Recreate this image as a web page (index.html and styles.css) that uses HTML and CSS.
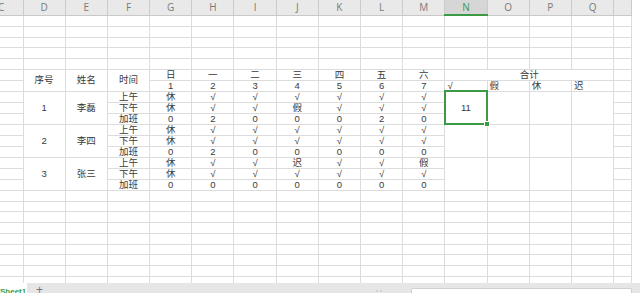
FILE: index.html
```html
<!DOCTYPE html>
<html lang="zh-CN">
<head>
  <meta charset="UTF-8">
  <meta name="viewport" content="width=device-width, initial-scale=1.0">
  <title>考勤表</title>
  <link rel="stylesheet" href="styles.css">
</head>
<body>

  <div class="app">
    <div class="grid-wrap">
      <table class="sheet">
        <colgroup>
          <col class="c-edge">
          <col><col><col><col><col><col><col><col><col><col><col><col><col><col>
          <col class="c-tail">
        </colgroup>
        <thead>
          <tr>
            <th class="edge">C</th><th>D</th><th>E</th><th>F</th><th>G</th><th>H</th><th>I</th><th>J</th>
            <th>K</th><th>L</th><th>M</th><th class="active">N</th><th>O</th><th>P</th><th>Q</th><th></th>
          </tr>
        </thead>
        <tbody>
          <tr><td></td><td></td><td></td><td></td><td></td><td></td><td></td><td></td><td></td><td></td><td></td><td></td><td></td><td></td><td></td><td></td></tr>
          <tr><td></td><td></td><td></td><td></td><td></td><td></td><td></td><td></td><td></td><td></td><td></td><td></td><td></td><td></td><td></td><td></td></tr>
          <tr><td></td><td></td><td></td><td></td><td></td><td></td><td></td><td></td><td></td><td></td><td></td><td></td><td></td><td></td><td></td><td></td></tr>
          <tr><td></td><td></td><td></td><td></td><td></td><td></td><td></td><td></td><td></td><td></td><td></td><td></td><td></td><td></td><td></td><td></td></tr>
          <tr><td></td><td></td><td></td><td></td><td></td><td></td><td></td><td></td><td></td><td></td><td></td><td></td><td></td><td></td><td></td><td></td></tr>

          <!-- 表头 -->
          <tr>
            <td></td>
            <td rowspan="2">序号</td><td rowspan="2">姓名</td><td rowspan="2">时间</td>
            <td>日</td><td>一</td><td>二</td><td>三</td><td>四</td><td>五</td><td>六</td>
            <td colspan="4">合计</td>
            <td></td>
          </tr>
          <tr>
            <td></td>
            <td>1</td><td>2</td><td>3</td><td>4</td><td>5</td><td>6</td><td>7</td>
            <td class="left">√</td><td class="left">假</td><td class="left">休</td><td class="left">迟</td>
            <td></td>
          </tr>

          <!-- 李磊 -->
          <tr>
            <td></td>
            <td rowspan="3">1</td><td rowspan="3">李磊</td><td>上午</td>
            <td>休</td><td>√</td><td>√</td><td>√</td><td>√</td><td>√</td><td>√</td>
            <td rowspan="3" class="sel">11</td><td rowspan="3"></td><td rowspan="3"></td><td rowspan="3"></td>
            <td></td>
          </tr>
          <tr>
            <td></td><td>下午</td>
            <td>休</td><td>√</td><td>√</td><td>假</td><td>√</td><td>√</td><td>√</td>
            <td></td>
          </tr>
          <tr>
            <td></td><td>加班</td>
            <td>0</td><td>2</td><td>0</td><td>0</td><td>0</td><td>2</td><td>0</td>
            <td></td>
          </tr>

          <!-- 李四 -->
          <tr>
            <td></td>
            <td rowspan="3">2</td><td rowspan="3">李四</td><td>上午</td>
            <td>休</td><td>√</td><td>√</td><td>√</td><td>√</td><td>√</td><td>√</td>
            <td rowspan="3"></td><td rowspan="3"></td><td rowspan="3"></td><td rowspan="3"></td>
            <td></td>
          </tr>
          <tr>
            <td></td><td>下午</td>
            <td>休</td><td>√</td><td>√</td><td>√</td><td>√</td><td>√</td><td>√</td>
            <td></td>
          </tr>
          <tr>
            <td></td><td>加班</td>
            <td>0</td><td>2</td><td>0</td><td>0</td><td>0</td><td>0</td><td>0</td>
            <td></td>
          </tr>

          <!-- 张三 -->
          <tr>
            <td></td>
            <td rowspan="3">3</td><td rowspan="3">张三</td><td>上午</td>
            <td>休</td><td>√</td><td>√</td><td>迟</td><td>√</td><td>√</td><td>假</td>
            <td rowspan="3"></td><td rowspan="3"></td><td rowspan="3"></td><td rowspan="3"></td>
            <td></td>
          </tr>
          <tr>
            <td></td><td>下午</td>
            <td>休</td><td>√</td><td>√</td><td>√</td><td>√</td><td>√</td><td>√</td>
            <td></td>
          </tr>
          <tr>
            <td></td><td>加班</td>
            <td>0</td><td>0</td><td>0</td><td>0</td><td>0</td><td>0</td><td>0</td>
            <td></td>
          </tr>

          <tr><td></td><td></td><td></td><td></td><td></td><td></td><td></td><td></td><td></td><td></td><td></td><td></td><td></td><td></td><td></td><td></td></tr>
          <tr><td></td><td></td><td></td><td></td><td></td><td></td><td></td><td></td><td></td><td></td><td></td><td></td><td></td><td></td><td></td><td></td></tr>
          <tr><td></td><td></td><td></td><td></td><td></td><td></td><td></td><td></td><td></td><td></td><td></td><td></td><td></td><td></td><td></td><td></td></tr>
          <tr><td></td><td></td><td></td><td></td><td></td><td></td><td></td><td></td><td></td><td></td><td></td><td></td><td></td><td></td><td></td><td></td></tr>
          <tr><td></td><td></td><td></td><td></td><td></td><td></td><td></td><td></td><td></td><td></td><td></td><td></td><td></td><td></td><td></td><td></td></tr>
          <tr><td></td><td></td><td></td><td></td><td></td><td></td><td></td><td></td><td></td><td></td><td></td><td></td><td></td><td></td><td></td><td></td></tr>
          <tr><td></td><td></td><td></td><td></td><td></td><td></td><td></td><td></td><td></td><td></td><td></td><td></td><td></td><td></td><td></td><td></td></tr>
          <tr><td></td><td></td><td></td><td></td><td></td><td></td><td></td><td></td><td></td><td></td><td></td><td></td><td></td><td></td><td></td><td></td></tr>
          <tr><td></td><td></td><td></td><td></td><td></td><td></td><td></td><td></td><td></td><td></td><td></td><td></td><td></td><td></td><td></td><td></td></tr>
        </tbody>
      </table>
    </div>

    <div class="tabbar">
      <span class="tab">Sheet1</span>
      <span class="add">+</span>
      <span class="spacer"></span>
      <span class="nav">⁞ ⁞</span>
      <div class="hscroll"></div>
    </div>
  </div>

</body>
</html>
```

FILE: styles.css
```css
body {
  margin: 0;
  background: #fff;
  font-family: 'Liberation Sans', 'Noto Sans CJK SC', sans-serif;
  color: #3a3a3a;
}
.app {
  width: 640px;
  height: 293px;
  display: flex;
  flex-direction: column;
  overflow: hidden;
}
.grid-wrap {
  height: 283px;
  overflow: hidden;
}
.sheet {
  width: 632px;
  table-layout: fixed;
  border-collapse: collapse;
  font-size: 9.5px;
  line-height: 10px;
}
.sheet col {
  width: 42.2px;
}
.sheet col.c-edge {
  width: 23px;
}
.sheet col.c-tail {
  width: 18px;
}
.sheet th {
  height: 14px;
  padding: 0;
  background: #e9e9e9;
  border-left: 1px solid #cbcbcb;
  border-right: 1px solid #cbcbcb;
  border-bottom: 1px solid #c9c9c9;
  font-family: 'Open Sans', 'Noto Sans', sans-serif;
  font-weight: normal;
  font-size: 10px;
  color: #7a7a7a;
  text-align: center;
}
.sheet th.edge {
  text-align: left;
  text-indent: -2px;
  border-left: none;
}
.sheet th.active {
  background: #d6d6d6;
  color: #3b9a43;
  border-bottom: 2px solid #3b9a43;
}
.sheet td {
  height: 9.75px;
  padding: 0;
  border: 1px solid #dcdcdc;
  text-align: center;
  white-space: nowrap;
  overflow: hidden;
}
.sheet td:first-child {
  border-left: none;
}
.sheet td.left {
  text-align: left;
  padding-left: 2px;
}
.sheet td.sel {
  position: relative;
  outline: 2px solid #3b9a43;
  outline-offset: -1px;
  overflow: visible;
}
.sheet td.sel::after {
  content: '';
  position: absolute;
  right: -3px;
  bottom: -3px;
  width: 4px;
  height: 4px;
  background: #3b9a43;
  border: 1px solid #fff;
}
.tabbar {
  height: 10px;
  background: #e6e6e6;
  display: flex;
  align-items: flex-start;
  font-size: 8px;
  line-height: 10px;
  color: #888;
}
.tab {
  width: 27px;
  height: 10px;
  background: #fff;
  color: #3b9a43;
  font-weight: bold;
  padding-top: 4px;
  box-sizing: border-box;
  line-height: 9px;
  overflow: hidden;
}
.add {
  margin-left: 9px;
  font-size: 12px;
  color: #777;
  line-height: 14px;
}
.spacer {
  flex: 1;
}
.nav {
  width: 20px;
  margin-right: 15px;
  padding-top: 5px;
  color: #999;
  font-size: 7px;
}
.hscroll {
  width: 219px;
  height: 5px;
  margin-top: 5px;
  margin-right: 8px;
  background: #fff;
  border: 1px solid #d0d0d0;
  border-bottom: none;
  border-radius: 2px 2px 0 0;
}
```
